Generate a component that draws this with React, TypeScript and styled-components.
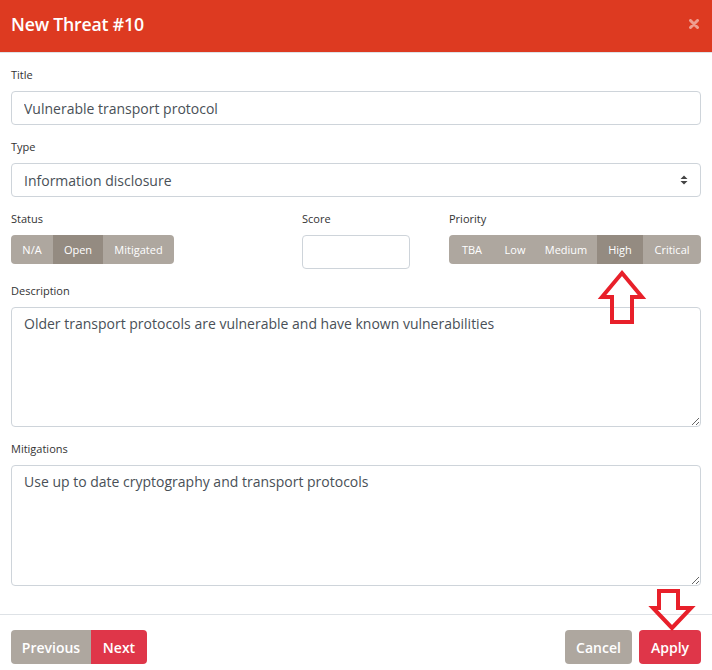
import React from "react";
import styled, { createGlobalStyle } from "styled-components";

const Global = createGlobalStyle`
  html, body { margin: 0; padding: 0; background: #fff; }
  body { font-family: "Open Sans", "Liberation Sans", sans-serif; color: #333; }
  * { box-sizing: border-box; }
`;

const Modal = styled.div`
  position: relative;
  width: 712px;
  height: 670px;
  overflow: hidden;
  background: #fff;
`;

const Header = styled.div`
  height: 53px;
  background: #dd3a21;
  border-bottom: 1px solid #dee2e6;
  display: flex;
  align-items: center;
  justify-content: space-between;
  padding: 0 13px 5px 11px;
`;

const HeaderTitle = styled.h5`
  margin: 0;
  color: #fff;
  font-size: 17.7px;
  font-weight: 600;
  letter-spacing: -0.2px;
`;

const Close = styled.button`
  border: 0;
  background: none;
  padding: 0;
  display: flex;
  color: rgba(255, 255, 255, 0.5);
`;

const Body = styled.div`
  padding: 12px 11px 0 11px;
`;

const Group = styled.div<{ $last?: boolean }>`
  margin-bottom: ${(p) => (p.$last ? 0 : 12)}px;
`;

const Label = styled.label`
  display: block;
  font-size: 11px;
  line-height: 18px;
  padding-top: 1px;
  margin-bottom: 7px;
  color: #333;
`;

const TextInput = styled.input`
  display: block;
  width: 100%;
  height: 34px;
  padding: 0 12px;
  font-family: inherit;
  font-size: 14px;
  color: #495057;
  border: 1px solid #ced4da;
  border-radius: 4px;
  background: #fff;
  outline: none;
`;

const SelectBox = styled.div`
  position: relative;
  display: flex;
  align-items: center;
  height: 34px;
  padding: 0 12px;
  font-size: 14px;
  color: #495057;
  border: 1px solid #ced4da;
  border-radius: 4px;
`;

const SelectArrow = styled.svg`
  position: absolute;
  right: 12px;
  top: 11px;
`;

const Row = styled.div`
  display: grid;
  grid-template-columns: 291px 147px 1fr;
`;

const BtnGroup = styled.div`
  display: flex;
  width: max-content;
  border-radius: 4px;
  overflow: hidden;
`;

const SegBtn = styled.button<{ $active?: boolean; $w: number }>`
  width: ${(p) => p.$w}px;
  height: 29px;
  border: 0;
  padding: 0;
  font-family: inherit;
  font-size: 11px;
  color: #fff;
  background: ${(p) => (p.$active ? "#948b81" : "#aea79f")};
`;

const ScoreInput = styled(TextInput)`
  width: 108px;
`;

const TextArea = styled.textarea<{ $h: number }>`
  display: block;
  width: 100%;
  height: ${(p) => p.$h}px;
  padding: 5px 12px;
  font-family: inherit;
  font-size: 14px;
  line-height: 21px;
  color: #495057;
  border: 1px solid #ced4da;
  border-radius: 4px;
  outline: none;
  resize: vertical;
`;

const Footer = styled.div`
  border-top: 1px solid #dee2e6;
  margin-top: 28px;
  padding: 15px 11px;
  display: flex;
  justify-content: space-between;
`;

const FooterGroup = styled.div<{ $gap: number }>`
  display: flex;
  gap: ${(p) => p.$gap}px;
`;

const Btn = styled.button<{ $variant: "gray" | "red"; $w: number; $joined?: "left" | "right" }>`
  width: ${(p) => p.$w}px;
  height: 34px;
  border: 0;
  border-radius: ${(p) =>
    p.$joined === "left" ? "4px 0 0 4px" : p.$joined === "right" ? "0 4px 4px 0" : "4px"};
  font-family: inherit;
  font-size: 14px;
  font-weight: 600;
  color: #fff;
  background: ${(p) => (p.$variant === "red" ? "#df3649" : "#aea79f")};
`;

const Overlay = styled.svg`
  position: absolute;
  left: 0;
  top: 0;
  pointer-events: none;
`;

export default function App() {
  return (
    <>
      <Global />
      <Modal>
        <Header>
          <HeaderTitle>New Threat #10</HeaderTitle>
          <Close aria-label="close">
            <svg width="10" height="10" viewBox="0 0 10 10">
              <path d="M1.5 1.5 L8.5 8.5 M8.5 1.5 L1.5 8.5" stroke="currentColor" strokeWidth="3" strokeLinecap="round" />
            </svg>
          </Close>
        </Header>
        <Body>
          <Group>
            <Label>Title</Label>
            <TextInput readOnly value="Vulnerable transport protocol" />
          </Group>
          <Group>
            <Label>Type</Label>
            <SelectBox>
              Information disclosure
              <SelectArrow width="8" height="10" viewBox="0 0 8 10">
                <path d="M0.5 4 L4 0.5 L7.5 4 Z M0.5 6 L4 9.5 L7.5 6 Z" fill="#444" />
              </SelectArrow>
            </SelectBox>
          </Group>
          <Row>
            <Group>
              <Label>Status</Label>
              <BtnGroup>
                <SegBtn $w={42}>N/A</SegBtn>
                <SegBtn $w={50} $active>Open</SegBtn>
                <SegBtn $w={71}>Mitigated</SegBtn>
              </BtnGroup>
            </Group>
            <Group>
              <Label>Score</Label>
              <ScoreInput readOnly value="" />
            </Group>
            <Group>
              <Label>Priority</Label>
              <BtnGroup>
                <SegBtn $w={46}>TBA</SegBtn>
                <SegBtn $w={40}>Low</SegBtn>
                <SegBtn $w={62}>Medium</SegBtn>
                <SegBtn $w={46} $active>High</SegBtn>
                <SegBtn $w={58}>Critical</SegBtn>
              </BtnGroup>
            </Group>
          </Row>
          <Group>
            <Label>Description</Label>
            <TextArea $h={120} readOnly value="Older transport protocols are vulnerable and have known vulnerabilities" />
          </Group>
          <Group $last>
            <Label>Mitigations</Label>
            <TextArea $h={121} readOnly value="Use up to date cryptography and transport protocols" />
          </Group>
        </Body>
        <Footer>
          <FooterGroup $gap={0}>
            <Btn $variant="gray" $w={80} $joined="left">Previous</Btn>
            <Btn $variant="red" $w={56} $joined="right">Next</Btn>
          </FooterGroup>
          <FooterGroup $gap={7}>
            <Btn $variant="gray" $w={67}>Cancel</Btn>
            <Btn $variant="red" $w={62}>Apply</Btn>
          </FooterGroup>
        </Footer>
        <Overlay width="712" height="670" viewBox="0 0 712 670">
          <path
            d="M622 273 L642 297 L632 297 L632 322 L612 322 L612 297 L602 297 Z"
            fill="none"
            stroke="#e8202a"
            strokeWidth="4"
            strokeLinejoin="miter"
          />
          <path
            d="M659 591 L678 591 L678 608 L691 608 L672 628 L653 608 L659 608 Z"
            fill="none"
            stroke="#e8202a"
            strokeWidth="4"
            strokeLinejoin="miter"
          />
        </Overlay>
      </Modal>
    </>
  );
}
